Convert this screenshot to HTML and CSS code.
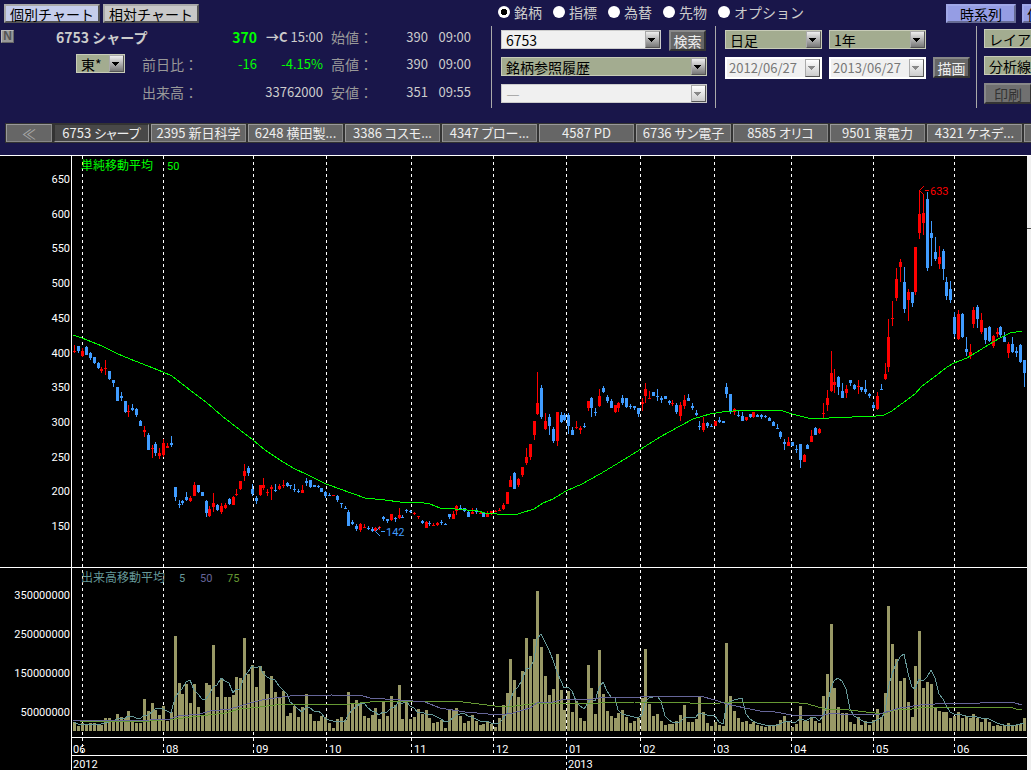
FILE: index.html
```html
<!DOCTYPE html>
<html lang="ja">
<head>
    <meta charset="UTF-8">
    <meta name="viewport" content="width=device-width, initial-scale=1.0">
    <title>個別チャート - 6753 シャープ</title>
    <link rel="stylesheet" href="styles.css">
</head>
<body>
    <header class="header">
        <div class="top-row">
            <div class="chart-switch">
                <button class="switch active">個別チャート</button>
                <button class="switch">相対チャート</button>
            </div>
            <div class="modes">
                <label><input type="radio" name="mode" checked>銘柄</label>
                <label><input type="radio" name="mode">指標</label>
                <label><input type="radio" name="mode">為替</label>
                <label><input type="radio" name="mode">先物</label>
                <label><input type="radio" name="mode">オプション</label>
            </div>
            <button class="blue-button">時系列</button>
            <button class="blue-button left">何本値</button>
        </div>

        <div class="info-row">
            <div class="quote">
                <span class="news">N</span>
                <span class="name">6753 シャープ</span>
                <b class="last up">370</b>
                <span class="num light"><b>→C</b> 15:00</span>
                <span class="caption">始値：</span>
                <span class="num light">390</span>
                <span class="num light">09:00</span>

                <div class="drop market">
                    <select aria-label="市場"><option>東*</option></select>
                </div>
                <span class="caption diff">前日比：</span>
                <span class="num up">-16</span>
                <span class="num up">-4.15%</span>
                <span class="caption">高値：</span>
                <span class="num light">390</span>
                <span class="num light">09:00</span>

                <span class="caption volume">出来高：</span>
                <span class="num light total">33762000</span>
                <span class="caption">安値：</span>
                <span class="num light">351</span>
                <span class="num light">09:55</span>
            </div>

            <div class="block search">
                <div class="line">
                    <div class="drop white code">
                        <select aria-label="銘柄コード"><option>6753</option></select>
                    </div>
                    <button class="gray-button">検索</button>
                </div>
                <div class="drop">
                    <select aria-label="銘柄参照履歴"><option>銘柄参照履歴</option></select>
                </div>
                <div class="drop white disabled">
                    <select aria-label="サブ銘柄" disabled><option>―</option></select>
                </div>
            </div>

            <div class="block period">
                <div class="line">
                    <div class="drop"><select aria-label="足種"><option>日足</option></select></div>
                    <div class="drop"><select aria-label="期間"><option>1年</option></select></div>
                </div>
                <div class="line">
                    <div class="drop white disabled date"><select aria-label="開始日" disabled><option>2012/06/27</option></select></div>
                    <div class="drop white disabled date"><select aria-label="終了日" disabled><option>2013/06/27</option></select></div>
                    <button class="gray-button">描画</button>
                </div>
            </div>

            <div class="block tools">
                <div class="drop"><select aria-label="レイアウト"><option>レイアウト</option></select></div>
                <div class="drop"><select aria-label="分析線"><option>分析線</option></select></div>
                <button class="gray-button" disabled>印刷</button>
            </div>
        </div>

        <nav class="tabs">
            <button class="tab back">≪</button>
            <button class="tab selected">6753 シャープ</button>
            <button class="tab">2395 新日科学</button>
            <button class="tab">6248 横田製...</button>
            <button class="tab">3386 コスモ...</button>
            <button class="tab">4347 ブロー...</button>
            <button class="tab">4587 PD</button>
            <button class="tab">6736 サン電子</button>
            <button class="tab">8585 オリコ</button>
            <button class="tab">9501 東電力</button>
            <button class="tab">4321 ケネデ...</button>
            <button class="tab" aria-label="次の銘柄"></button>
        </nav>
    </header>

    <main class="chart-area">
        <svg class="chart" id="chart" viewBox="0 0 1027 614"></svg>
        <div class="side"></div>
    </main>

    <script src="chart.js"></script>
</body>
</html>
```
FILE: styles.css
```css
body {
    margin: 0;
    background-color: #000;
    font-family: "Noto Sans CJK JP", sans-serif;
    font-size: 14px;
    line-height: 16px;
    overflow: hidden;
}

button, select, input {
    font-family: inherit;
    font-size: inherit;
    line-height: inherit;
    margin: 0;
    box-sizing: border-box;
}

button {
    padding: 0;
    white-space: nowrap;
    flex-shrink: 0;
}

.header {
    background-color: #19164a;
    border-bottom: 1px solid #fff;
    overflow: hidden;
}

/* Top row */
.top-row {
    display: flex;
    gap: 6px;
    padding: 4px 0 0 4px;
    height: 22px;
}

.chart-switch {
    display: flex;
    gap: 3px;
    flex: 0 0 488px;
}

.switch {
    width: 96px;
    height: 19px;
    border: 2px outset #aaa;
    background-color: #c8c8c8;
    color: #000;
    line-height: 14px;
}

.switch.active {
    background-color: #c5cdec;
}

.modes {
    display: flex;
    gap: 11px;
    flex: 0 0 442px;
    color: #ccc;
}

.modes label {
    display: flex;
    align-items: center;
    height: 16px;
    gap: 4px;
    white-space: nowrap;
}

.modes input {
    appearance: none;
    width: 12px;
    height: 12px;
    border-radius: 50%;
    background-color: #fff;
}

.modes input:checked {
    background-image: radial-gradient(circle, #000 0 3px, #fff 3px);
}

.blue-button {
    width: 70px;
    height: 19px;
    border: 2px outset #a0a8e8;
    background-color: #959de4;
    color: #000;
    line-height: 14px;
}

.blue-button.left {
    text-align: left;
    padding-left: 3px;
}

/* Quote and settings */
.info-row {
    display: flex;
    height: 82px;
}

.quote {
    display: grid;
    grid-template-columns: 56px 86px 60px 55px 66px 8px 60px 37px 43px;
    grid-template-rows: 22px 31px 25px;
    align-items: center;
    flex: 0 0 491px;
    color: #ccc;
    white-space: nowrap;
}

.news {
    width: 13px;
    height: 13px;
    margin-left: 1px;
    align-self: start;
    margin-top: 4px;
    box-sizing: border-box;
    border: 1px outset #bbb;
    background-color: #999;
    color: #555;
    font: bold 12px/11px "Liberation Sans", sans-serif;
    text-align: center;
}

.name {
    grid-column: 2 / 4;
    font-weight: bold;
}

.last {
    text-align: right;
    font-size: 14px;
}

.num {
    font-size: 13px;
    text-align: right;
}

.caption {
    color: #999;
}

.quote .caption {
    grid-column: 7;
}

.quote .diff, .quote .volume {
    grid-column: 3;
}

.quote .total {
    grid-column: 4 / 6;
}

.up {
    color: #0f0;
}

.market {
    grid-column: 2;
    width: 49px;
    margin-left: 20px;
}

.block {
    display: flex;
    flex-direction: column;
    gap: 8px;
    padding: 4px 8px 0 9px;
    border-left: 1px solid #aaa;
    box-sizing: border-box;
}

.line {
    display: flex;
    gap: 7px;
    height: 19px;
}

.search {
    flex: 0 0 224px;
}

.search .code {
    width: 160px;
}

.search .gray-button {
    margin-left: 1px;
}

.period {
    flex: 0 0 261px;
    padding-right: 6px;
}

.period .drop {
    width: 97px;
}

.tools {
    flex: 1 0 0;
    min-width: 0;
    padding: 3px 0 0 7px;
}

.drop {
    position: relative;
    height: 19px;
    box-sizing: border-box;
    flex-shrink: 0;
}

.drop select {
    appearance: none;
    display: block;
    width: 100%;
    height: 100%;
    padding: 0 18px 0 4px;
    border: 1px solid #c8ccb8;
    border-radius: 0;
    background-color: #a3ac90;
    color: #000;
}

/* Arrow box over the right end of the select */
.drop::after {
    content: "";
    position: absolute;
    top: 1px;
    right: 1px;
    bottom: 1px;
    width: 15px;
    box-sizing: border-box;
    border: 1px outset #aaa;
    background: linear-gradient(to bottom right, #000 50%, transparent 50%) 6px 6px / 4px 4px no-repeat,
        linear-gradient(to bottom left, #000 50%, transparent 50%) 2px 6px / 4px 4px no-repeat,
        linear-gradient(#eee, #777);
    pointer-events: none;
}

.tools .drop {
    width: 90px;
}

.drop.white select {
    background-color: #f0f0f0;
    border-color: #ccc;
}

.drop.disabled select {
    color: #777;
    opacity: 1;
}

.drop.disabled::after {
    background: linear-gradient(to bottom right, #888 50%, transparent 50%) 6px 6px / 4px 4px no-repeat,
        linear-gradient(to bottom left, #888 50%, transparent 50%) 2px 6px / 4px 4px no-repeat,
        linear-gradient(#fff, #ccc);
}

.drop.date {
    height: 22px;
}

.drop.date select {
    border: 2px solid #fff;
    padding-left: 2px;
    font-size: 13px;
}

.drop.date::after {
    top: 2px;
    right: 2px;
    bottom: 2px;
}

.gray-button {
    width: 37px;
    height: 21px;
    border: 2px outset #888;
    background-color: #666;
    color: #eee;
}

.gray-button:disabled {
    width: 48px;
    color: #333;
    background-color: #707070;
}

/* Tabs */
.tabs {
    display: flex;
    gap: 2px;
    width: max-content;
    margin: 15px 0 12px 5px;
    padding: 1px;
    background-color: #333;
}

.tab {
    width: 95px;
    height: 18px;
    border: 1px solid;
    border-color: #999 #888 #888 #999;
    background-color: #666;
    color: #eee;
    font-size: 13px;
    line-height: 14px;
    font-feature-settings: "palt";
}

.tab.selected {
    background-color: #484848;
    border-color: #333 #999 #999 #333;
}

.tab.back {
    width: 46px;
    color: #aaa;
    font-size: 14px;
}

/* Chart */
.chart-area {
    display: flex;
}

.chart {
    display: block;
    flex: 1;
    min-width: 0;
    background-color: #000;
    font-family: Roboto, "Noto Sans CJK JP", sans-serif;
    font-size: 11px;
}

.side {
    flex: 0 0 4px;
    background: linear-gradient(#555, #555) 0 72px / 4px 1px no-repeat, #f0f0f0;
}

.chart rect, .chart line, .chart polyline {
    shape-rendering: crispEdges;
}

.frame {
    stroke: #fff;
}

.month {
    stroke: #fff;
    stroke-dasharray: 3 3;
}

.axis {
    fill: #fff;
}

.legend {
    font-family: "Noto Sans CJK JP", sans-serif;
    font-size: 12px;
}

.candle-up {
    fill: #f00;
}

.candle-down {
    fill: #409cff;
}

.bar {
    fill: #999966;
}

.average, .arrow-up, .arrow-down {
    fill: none;
}

.price50 {
    stroke: #0f0;
}

.vol5 {
    stroke: #669999;
}

.vol50 {
    stroke: #666699;
}

.vol75 {
    stroke: #669933;
}

.text-price {
    fill: #0f0;
}

.text-5 {
    fill: #669999;
}

.text-50 {
    fill: #666699;
}

.text-75 {
    fill: #669933;
}

.arrow-up {
    stroke: #f00;
}

.arrow-down {
    stroke: #409cff;
}
```
FILE: chart.js
```js
// r = up, b = down; then high, body top, body bottom, low
const candles = `
r189 195 196 197,b190 190 195 197,r192 195 200 201,b190 191 199 199,b196 197 202 204,b201 201 207 208,b206 207 212 213,r211 213 215 217,r204 212 213 219,b215 215 223 224,
b224 224 227 231,b231 231 245 245,b236 240 242 245,b245 245 256 257,r249 255 256 261,b248 252 254 255,b252 253 259 261,b264 265 270 270,r270 274 276 281,b277 279 294 294,
r289 292 293 302,b286 288 297 300,r292 297 300 303,r283 287 299 301,r287 290 292 292,b280 287 289 291,b331 331 341 345,b344 348 349 352,b344 345 347 349,b336 341 344 345,
r340 342 345 346,r326 329 340 340,b329 329 336 337,b336 336 340 340,b344 345 357 361,r350 353 360 361,r337 347 351 356,b348 349 354 355,r347 350 356 358,r347 349 352 353,
b342 343 348 349,r340 341 349 349,r333 338 339 340,r325 325 333 334,r308 315 320 325,b310 312 317 320,b328 333 338 340,b340 342 345 348,r329 329 339 340,r322 329 332 334,
r333 336 337 340,r329 331 333 344,b328 334 335 336,r328 330 333 334,r324 329 330 332,b326 327 330 331,b329 329 330 333,b328 333 334 336,b333 335 336 337,r329 334 337 337,
b322 325 327 330,b324 324 331 332,b329 329 331 331,b329 330 331 332,b332 332 336 336,b335 336 340 342,b337 339 340 340,r339 339 340 340,b339 340 344 346,b347 347 348 352,
b350 352 353 353,b354 356 370 370,b364 366 368 369,b368 370 373 375,r367 368 374 376,r368 371 372 372,b370 372 373 374,b371 373 375 376,r371 372 375 375,r370 371 372 374,
b360 361 363 365,b363 363 365 367,r358 358 364 365,b361 362 363 366,r352 359 362 363,b359 361 362 362,b353 354 355 357,b354 355 356 357,r356 357 358 359,r360 360 361 363,
b364 365 367 368,r365 366 372 372,b365 367 368 370,r367 369 370 370,r366 367 369 370,b364 366 367 369,b367 368 369 369,b358 358 361 363,r355 358 363 363,r349 350 355 359,
b349 352 353 354,b352 352 355 356,b355 356 361 361,r352 356 358 358,b352 354 356 358,r355 357 358 358,b356 357 361 361,r355 357 361 361,r355 355 358 359,r354 355 356 356,
r352 354 355 355,r347 349 353 354,r336 336 348 348,r320 324 331 331,b316 317 333 333,r322 323 329 331,r311 311 319 321,r292 301 307 309,r288 288 301 304,r265 265 279 284,
r216 247 258 259,b229 232 261 263,r257 265 273 274,b258 261 270 279,b271 273 285 287,r256 256 285 290,b256 259 266 267,b257 259 264 265,b257 259 270 278,b271 274 279 279,
r265 271 272 273,r270 272 274 278,b267 270 271 272,r245 245 252 255,b241 242 252 261,b252 256 257 260,r233 240 250 251,b230 232 236 237,b239 241 245 247,b243 245 252 252,
r249 249 256 257,r246 247 252 256,b239 242 247 249,b242 242 251 252,b248 250 251 253,b250 250 252 254,b252 252 258 261,r242 246 248 255,r227 233 240 247,r235 242 243 243,
b236 236 240 240,b233 240 241 245,b240 242 244 247,b240 240 243 243,b244 245 247 249,r244 247 248 250,b247 249 256 258,r246 249 260 265,r239 244 250 253,b238 242 245 245,
b247 250 252 254,b254 257 259 260,b265 270 271 274,r261 267 274 276,b266 267 270 272,b268 270 271 271,r265 265 270 270,b261 264 266 267,b265 265 267 267,b227 231 238 242,
b238 238 255 258,r252 253 256 259,b254 259 260 261,b256 260 265 265,r261 261 264 265,b258 258 261 262,r256 256 261 262,b258 259 261 261,b258 259 261 263,b259 260 261 262,
b261 262 265 265,b265 266 270 270,b268 272 273 273,b275 276 281 283,b283 286 288 294,r281 286 290 290,b286 286 290 290,b289 293 294 297,b288 288 304 312,r298 299 306 306,
b288 289 293 293,r274 280 286 286,b271 272 279 279,r272 273 277 278,r247 257 258 263,r234 242 249 255,r195 217 235 236,r213 226 229 237,b220 221 231 239,b227 235 242 242,
r229 233 237 242,b224 224 227 230,b228 229 233 234,r224 230 231 238,b231 231 234 236,b224 233 236 238,b237 238 240 242,b246 249 252 253,r236 240 253 254,b228 233 234 234,
r207 218 223 224,r163 181 211 216,r145 162 163 170,r112 123 142 145,r103 106 111 126,b111 126 153 157,r133 136 144 165,b136 136 147 151,r91 91 136 139,r34 58 77 83,
r38 57 67 79,b36 43 112 115,b65 77 82 110,b81 96 103 105,r90 101 108 113,b93 95 113 124,b121 126 140 144,b125 133 144 147,b156 161 178 181,r154 158 183 184,
b157 158 181 182,b181 193 196 200,r188 196 200 203,r151 154 168 172,b149 151 163 172,r157 164 176 178,b172 172 184 188,b170 171 185 186,r179 180 190 192,r172 176 178 181,
b170 171 179 181,b176 181 186 186,r186 188 197 202,b181 188 196 197,b191 195 197 201,b188 189 206 207,b204 204 217 231`;

const volumes = [
    9, 5, 8, 7, 8, 8, 6, 6, 13, 13, 10, 17, 14, 13, 20, 11, 8, 8, 32, 20,
    28, 21, 16, 25, 10, 19, 95, 48, 37, 47, 28, 47, 24, 15, 48, 46, 86, 34, 52, 34,
    34, 36, 54, 53, 93, 57, 66, 44, 65, 60, 37, 55, 39, 34, 40, 15, 18, 25, 14, 24,
    37, 17, 10, 10, 15, 14, 8, 3, 12, 14, 11, 39, 27, 31, 27, 15, 13, 16, 23, 12,
    30, 15, 35, 26, 46, 12, 29, 12, 14, 22, 17, 21, 13, 8, 9, 11, 3, 21, 21, 23,
    15, 8, 10, 16, 10, 6, 7, 9, 7, 4, 13, 26, 38, 72, 51, 34, 60, 93, 75, 92,
    140, 84, 55, 36, 42, 77, 41, 21, 40, 19, 30, 13, 10, 66, 43, 17, 81, 37, 20, 15,
    13, 18, 21, 14, 8, 10, 13, 33, 82, 27, 15, 17, 10, 6, 7, 7, 10, 16, 26, 9,
    9, 12, 34, 19, 8, 5, 9, 6, 5, 88, 35, 20, 13, 9, 10, 7, 9, 6, 5, 4,
    6, 6, 7, 11, 15, 10, 4, 7, 25, 10, 10, 14, 10, 8, 35, 57, 107, 43, 24, 18,
    18, 9, 7, 14, 6, 10, 6, 11, 22, 14, 38, 125, 87, 72, 50, 53, 29, 14, 65, 100,
    43, 49, 47, 24, 20, 19, 19, 13, 15, 19, 13, 15, 13, 17, 13, 9, 12, 9, 5, 6,
    5, 6, 8, 6, 6, 7, 13
];

const price50 = "73,179 82,182 102,190 118,198 130,203 153,212 163,216 172,220 186,231 206,246 222,260 240,274 253,284 265,294 280,304 293,312 308,319 326,328 340,333 365,342 385,344 400,346 418,346 430,348 440,352 455,353 478,355 485,357 497,358 518,358 534,353 543,347 553,343 566,335 582,328 600,318 620,306 641,293 660,281 680,270 693,263 710,258 722,256 745,254 780,254 792,258 808,262 826,263 832,261 852,261 876,260 884,259 892,255 900,249 915,238 922,230 933,222 947,211 954,207 967,202 985,191 1000,182 1010,177 1022,175";
const vol50 = "73,565 150,564 170,563 178,560 200,558 210,555 230,553 250,547 262,544 275,542 290,540 332,539 363,540 370,542 400,544 425,546 440,552 465,556 500,559 513,557 530,552 537,547 553,546 565,543 593,543 605,541 640,541 655,540 700,540 715,544 727,548 745,552 760,555 775,556 792,559 820,560 832,557 840,558 880,558 893,554 900,552 920,549 935,548 955,547 980,547 990,546 1010,546 1015,547 1022,549";
const vol75 = "73,564 80,565 150,565 175,563 200,560 225,557 240,553 260,551 275,549 300,548 350,548 380,545 435,545 463,546 495,550 515,550 540,547 600,547 635,546 670,546 690,547 720,547 735,546 790,546 808,548 825,553 840,553 875,557 885,557 895,554 912,553 925,551 1010,551 1016,553 1022,553";

const months = [[82, ""], [163, "08"], [253, "09"], [326, "10"], [411, "11"], [493, "12"],
    [566, "01"], [640, "02"], [714, "03"], [791, "04"], [873, "05"], [954, "06"]];

function dayX(i) {
    return Math.floor(74.95 + i * 3.858);
}

let out = "";

function line(x1, y1, x2, y2, cls) {
    out += `<line x1="${x1}" y1="${y1}" x2="${x2}" y2="${y2}" class="${cls}"/>`;
}

function text(x, y, value, cls, anchor = "start") {
    out += `<text x="${x}" y="${y}" class="${cls}" text-anchor="${anchor}">${value}</text>`;
}

function rect(x, y, w, h, cls) {
    out += `<rect x="${x}" y="${y}" width="${w}" height="${h}" class="${cls}"/>`;
}

months.forEach(([x, label]) => {
    line(x + 0.5, 0, x + 0.5, 599, "month");
    text(x + 3, 597, label, "axis");
});
text(73, 597, "06", "axis");
text(73, 612, "2012", "axis");
text(568, 612, "2013", "axis");
line(566.5, 600, 566.5, 614, "month");

volumes.forEach((v, i) => rect(dayX(i) - 1, 575 - v, 3, v, "bar"));

candles.trim().split(/,\s*/).forEach((c, i) => {
    const [high, top, bottom, low] = c.slice(1).split(" ").map(Number);
    const cls = c[0] === "r" ? "candle-up" : "candle-down";
    rect(dayX(i), high, 1, Math.max(low - high, 1), cls);
    rect(dayX(i) - 1, top, 3, Math.max(bottom - top, 1), cls);
});

// 5 day average of the volume
const vol5 = volumes.map((v, i) => {
    const part = volumes.slice(Math.max(0, i - 4), i + 1);
    return dayX(i) + "," + (575 - Math.round(part.reduce((a, b) => a + b) / part.length));
}).join(" ");

[[price50, "price50"], [vol5, "vol5"], [vol75, "vol75"], [vol50, "vol50"]].forEach(([points, cls]) => {
    out += `<polyline points="${points}" class="average ${cls}"/>`;
});

line(71.5, 0, 71.5, 614, "frame");
line(0, 411.5, 1027, 411.5, "frame");
line(71, 581.5, 1027, 581.5, "frame");
line(71, 599.5, 1027, 599.5, "frame");

for (let price = 650; price >= 150; price -= 50) {
    text(70, Math.round(27 + (650 - price) * 0.694), price, "axis", "end");
}
[350000000, 250000000, 150000000, 50000000].forEach((v, i) => text(70, 443 + i * 39, v, "axis", "end"));

text(81, 14, "単純移動平均", "legend text-price");
text(167, 14, "50", "text-price");
text(81, 426, "出来高移動平均", "legend text-5");
text(179, 426, "5", "text-5");
text(200, 426, "50", "text-50");
text(227, 426, "75", "text-75");

// high and low marks
out += `<path class="arrow-up" d="M924 30L919.500 34.500L924 39M925 34.500H929"/>`;
text(930, 39, "633", "candle-up");
out += `<path class="arrow-down" d="M380 371L375.500 375.500L380 380M381 375.500H385"/>`;
text(386, 380, "142", "candle-down");

document.getElementById("chart").innerHTML = out;
```
